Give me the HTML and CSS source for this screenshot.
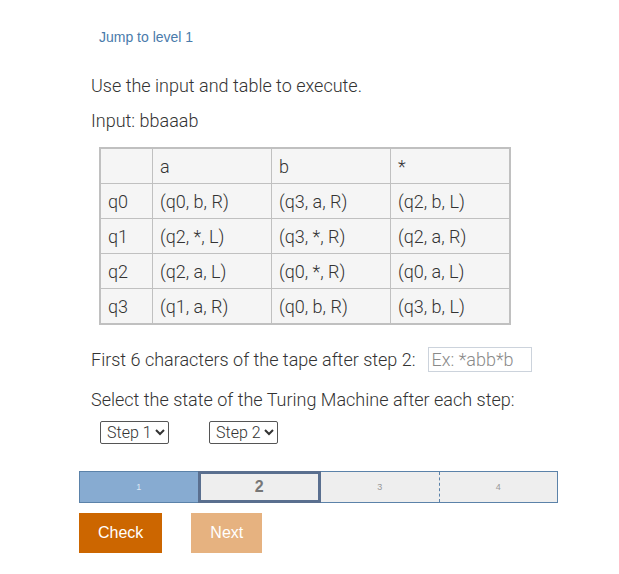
FILE: index.html
```html
<!DOCTYPE html>
<html>
<head>
<meta charset="utf-8">
<link rel="stylesheet" href="styles.css">
</head>
<body>
<div class="page">
  <a class="jump" href="#">Jump to level 1</a>
  <div class="content">
    <p class="line first">Use the input and table to execute.</p>
    <p class="line">Input: bbaaab</p>
    <table class="tm">
      <tr><td class="st"></td><td>a</td><td>b</td><td>*</td></tr>
      <tr><td class="st">q0</td><td>(q0, b, R)</td><td>(q3, a, R)</td><td>(q2, b, L)</td></tr>
      <tr><td class="st">q1</td><td>(q2, *, L)</td><td>(q3, *, R)</td><td>(q2, a, R)</td></tr>
      <tr><td class="st">q2</td><td>(q2, a, L)</td><td>(q0, *, R)</td><td>(q0, a, L)</td></tr>
      <tr><td class="st">q3</td><td>(q1, a, R)</td><td>(q0, b, R)</td><td>(q3, b, L)</td></tr>
    </table>
    <div class="line tape">
      <span>First 6 characters of the tape after step 2:</span>
      <input class="tapein" type="text" placeholder="Ex: *abb*b">
    </div>
    <p class="line">Select the state of the Turing Machine after each step:</p>
    <div class="selects">
      <select class="sel"><option>Step 1</option></select>
      <select class="sel"><option>Step 2</option></select>
    </div>
  </div>
  <div class="progress">
    <div class="seg done">1</div>
    <div class="seg current">2</div>
    <div class="seg">3</div>
    <div class="seg dashed">4</div>
  </div>
  <div class="buttons">
    <button class="btn check">Check</button>
    <button class="btn next">Next</button>
  </div>
</div>
</body>
</html>
```
FILE: styles.css
```css
html, body { margin: 0; padding: 0; background: #fff; }
.page { padding: 28px 0 0 79px; width: 480px; }
.jump {
  display: block;
  margin-left: 20px;
  font-family: "Liberation Sans", Arial, sans-serif;
  font-size: 14px;
  color: #4a7bab;
  text-decoration: none;
  line-height: 18px;
}
.content { padding-left: 12px; }
.line {
  margin: 0;
  font-family: Roboto, "Noto Sans", sans-serif;
  font-weight: 300;
  font-size: 18px;
  color: #333;
  line-height: 24px;
}
.first { margin-top: 28px; }
.line + .line { margin-top: 11px; }
.tm {
  margin: 14px 0 0 8px;
  border-collapse: collapse;
  border: 2px solid #c0c0c0;
  background: #f5f5f5;
  font-family: Roboto, "Noto Sans", sans-serif;
  font-weight: 300;
  font-size: 18px;
  color: #333;
}
.tm td {
  border: 1px solid #c0c0c0;
  height: 34px;
  padding: 0 0 0 7px;
  width: 111px;
  text-align: left;
  vertical-align: middle;
}
.tm td.st { width: 44px; }
.tm tr:first-child td { height: 34px; }
.tape { display: flex; align-items: center; margin-top: 22px; }
.tapein {
  margin-left: 12px;
  width: 104px;
  height: 25px;
  box-sizing: border-box;
  border: 1px solid #ccd3dc;
  padding: 0 3px;
  font-family: Roboto, "Noto Sans", sans-serif;
  font-weight: 300;
  font-size: 18px;
  color: #333;
}
.tapein::placeholder { color: #8a8a8a; }
.tape + .line { margin-top: 16px; }
.selects { display: flex; gap: 40px; margin: 9px 0 0 9px; }
.sel {
  height: 23px;
  font-family: Roboto, "Noto Sans", sans-serif;
  font-weight: 300;
  font-size: 16px;
  color: #333;
  border: 1px solid #555;
  border-radius: 2px;
  background: #fff;
  padding: 0 0 0 2px;
}
.progress {
  display: flex;
  margin-top: 27px;
  width: 479px;
  height: 32px;
  box-sizing: border-box;
  border: 1px solid #5b82a9;
  background: #eee;
}
.seg {
  flex: 1;
  display: flex;
  align-items: center;
  justify-content: center;
  font-family: "Liberation Sans", Arial, sans-serif;
  font-size: 9px;
  color: #999;
}
.seg.done { background: #87abd1; color: #dde8f3; }
.seg.current {
  margin: -1px 0;
  border: 3px solid #5a6f8f;
  font-size: 16px;
  font-weight: bold;
  color: #777;
}
.seg.dashed { border-left: 1px dashed #5b82a9; }
.buttons { display: flex; gap: 29px; margin-top: 10px; }
.btn {
  height: 40px;
  border: none;
  font-family: "Liberation Sans", Arial, sans-serif;
  font-size: 16px;
  color: #fff;
  padding: 0 19px;
}
.check { background: #cc6600; }
.next { background: #e6b280; }
```
